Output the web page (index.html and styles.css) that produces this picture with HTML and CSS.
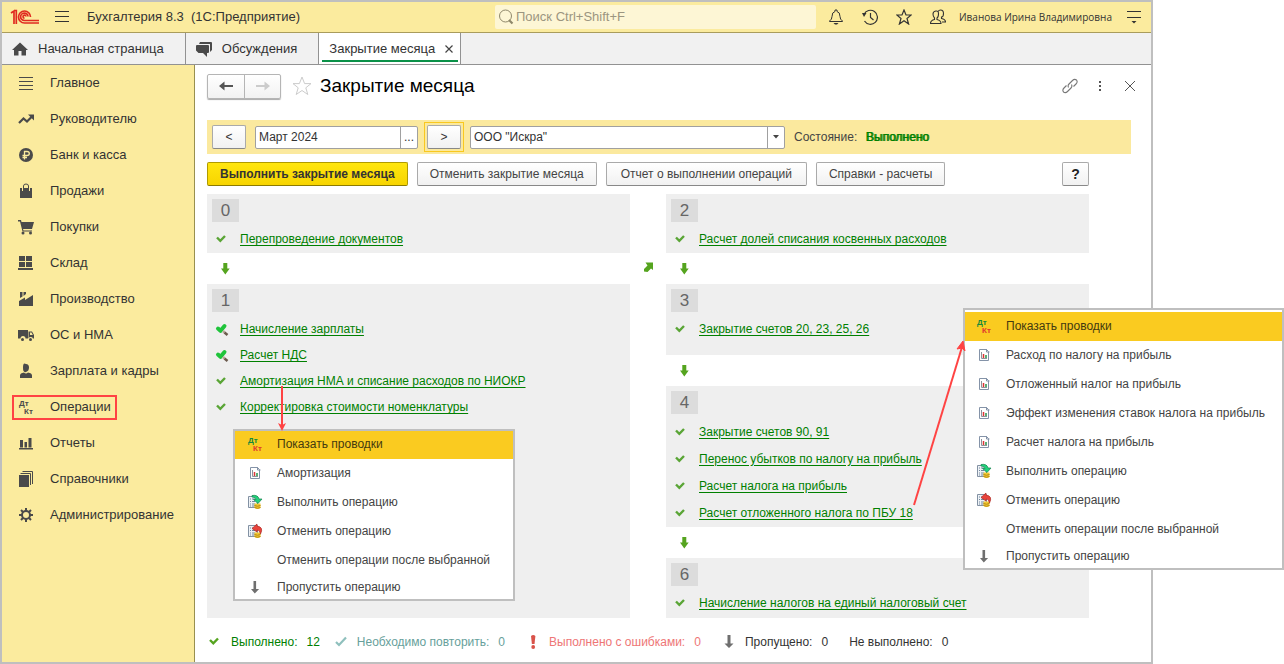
FILE: index.html
```html
<!DOCTYPE html>
<html lang="ru">
<head>
<meta charset="utf-8">
<title>Закрытие месяца</title>
<link rel="stylesheet" href="styles.css">
</head>
<body>
<svg class="defs" aria-hidden="true">
  <symbol id="check" viewBox="0 0 14 14"><path d="M2 5.500l3.300 3.300L10 4" fill="none" stroke="currentColor" stroke-width="2.400"/></symbol>
  <symbol id="check-hand" viewBox="0 0 14 14"><path d="M3 6.500l2.500 2.300L9.500 4" fill="none" stroke="#1fc43b" stroke-width="4" stroke-linecap="round" stroke-linejoin="round"/><path d="M8 9l1.500 1.500" stroke="#b9a797" stroke-width="2.500"/><path d="M9.500 10.500l3 2.500" stroke="#6b5a4d" stroke-width="2.500"/></symbol>
  <symbol id="down" viewBox="0 0 14 14"><path d="M5.300 1h4v5.500h2.400L7.300 12.500 3 6.500h2.300Z" fill="#55a41f"/></symbol>
  <symbol id="up-right" viewBox="0 0 14 14"><path d="M4.500 2.500H12V10l-2-1.500-3.500 3.500-3.500-.5V9l3.500-3.500Z" fill="#55a41f"/></symbol>
  <symbol id="skip" viewBox="0 0 16 16"><path d="M6.500 2h2.600v8h3L7.800 14.500 4 10h2.500Z" fill="#6f6f6f"/></symbol>
  <symbol id="report" viewBox="0 0 16 16"><path d="M3.500 2.500h7l2 2v9h-9Z" fill="#fff" stroke="#8493a8"/><path d="M10.500 2v3h3" fill="none" stroke="#8493a8"/><path d="M5.500 5v6.500H11" fill="none" stroke="#8d939b"/><path d="M7.500 7v4" stroke="#dc3636" stroke-width="1.500"/><path d="M10 8v3" stroke="#249448" stroke-width="1.500"/></symbol>
  <symbol id="sheet" viewBox="0 0 16 16"><path d="M1.500 2.500h9v11h-9Z" fill="#eef2f6" stroke="#8291a3"/><path d="M3 5h1m1 0h3M3 7.500h1m1 0h3M3 10h1m1 0h3M3 12h1m1 0h3" stroke="#71869d"/><path d="M7.500 9.500h6v4.500q-3 2-6 0Z" fill="#f2c832"/><path d="M7.500 11.500q3 1.500 6 0M7.500 13.500q3 1.500 6 0" fill="none" stroke="#b58813"/></symbol>
  <symbol id="run" viewBox="0 0 16 16"><use href="#sheet"/><path d="M5 1.500q6-1 7 3.500h3L11 9.500 6.500 5.500H9Q8.500 3 5 3Z" fill="#21d17a" stroke="#16834d" stroke-width=".7"/></symbol>
  <symbol id="undo" viewBox="0 0 16 16"><use href="#sheet"/><path d="M10 1l-5 4.500L10 9V7q3 0 3.500 4Q17 4 10 3Z" fill="#e8433c" stroke="#ae2823" stroke-width=".7"/></symbol>
</svg>

<div class="stage">
  <div class="window">
    <header class="topbar">
      <svg class="logo" viewBox="0 0 30 16" aria-label="1С"><g fill="none" stroke="#e02a20" stroke-width="1.700"><path d="M1 4l3-2v13M4 1.500h2.300V15"/><path d="M20.500 8a6 6 0 1 0-6 6H29"/><path d="M18 7.500a3.700 3.700 0 1 0-3.700 4H29"/><path d="M16 7.500a1.500 1.500 0 1 0-1.500 1.700"/></g></svg>
      <button class="icon-btn burger" aria-label="Меню"><svg viewBox="0 0 16 16"><path d="M1 2.500h14M1 7.500h14M1 12.500h14" stroke="#333"/></svg></button>
      <span class="app-name">Бухгалтерия 8.3&nbsp; (1С:Предприятие)</span>
      <label class="search"><svg viewBox="0 0 16 16"><circle cx="7.500" cy="7" r="6" fill="none" stroke="#8f886b"/><path d="M11 11l3.500 3.500" stroke="#8f886b" stroke-width="2.200"/></svg><input type="search" placeholder="Поиск Ctrl+Shift+F" aria-label="Поиск"></label>
      <div class="tools">
        <button class="icon-btn" aria-label="Уведомления"><svg viewBox="0 0 16 16"><path d="M1.500 12.500V12Q4 10.500 4 7.500 4 3 7 2.500V1h2v1.500q3 .5 3 5 0 3 2.500 4.500v.5Z" fill="none" stroke="#333"/><path d="M5.500 14h5l-1.500 1.500H7Z" fill="#333"/></svg></button>
        <button class="icon-btn" aria-label="История"><svg viewBox="0 0 16 16"><path d="M2 5.500A7 7 0 1 1 2.500 12" fill="none" stroke="#333" stroke-width="1.200"/><path d="M0 4h4.500L2 8Z" fill="#333"/><path d="M8.500 4v4.500l3 2.500" fill="none" stroke="#333" stroke-width="1.200"/></svg></button>
        <button class="icon-btn" aria-label="Избранное"><svg viewBox="0 0 16 16"><path d="M8 1l2 5h5.200l-4.200 3.500 1.600 5.500L8 11.800 3.400 15 5 9.500.8 6H6Z" fill="none" stroke="#333" stroke-width="1.200"/></svg></button>
        <button class="icon-btn" aria-label="Пользователи"><svg viewBox="0 0 16 16"><path d="M.5 14.500q0-3 4-4V9Q3 7.500 3 5t2.800-3T8.500 5 7 9v1.500q4 1 4 4Z" fill="none" stroke="#333" stroke-width="1.100"/><path d="M8 2.500q1-1.500 2.500-1.500Q13.500 1 13.500 4.500T11.500 8v1.500q4 .8 4 3.500H12" fill="none" stroke="#333" stroke-width="1.100"/></svg></button>
      </div>
      <span class="user">Иванова Ирина Владимировна</span>
      <button class="icon-btn" aria-label="Настройки"><svg viewBox="0 0 16 16"><path d="M1 2.500h14M1 8.500h14" stroke="#333"/><path d="M5.500 12h5L8 14.500Z" fill="#333"/></svg></button>
    </header>

    <nav class="tabs">
      <a class="tab tab-home" href="#"><svg viewBox="0 0 16 16"><path d="M8 1.500L16 9h-2v5.500H9.500V10h-3v4.500H2V9H0Z" fill="#4a4a4a"/></svg>Начальная страница</a>
      <a class="tab tab-talk" href="#"><svg viewBox="0 0 16 16"><path d="M4 1h11q1 0 1 1v7l-2 2V3H3Z" fill="#4a4a4a"/><path d="M1 4h11q1 0 1 1v6q0 1-1 1h-1v4l-4-4H2.500L0 9.500V5q0-1 1-1Z" fill="#4a4a4a"/></svg>Обсуждения</a>
      <div class="tab tab-active"><a href="#">Закрытие месяца</a><button class="tab-close" aria-label="Закрыть вкладку"><svg viewBox="0 0 8 8"><path d="M.5.5l7 7m0-7l-7 7" stroke="#444" stroke-width="1.200"/></svg></button></div>
    </nav>

    <div class="body">
      <nav class="sidebar">
        <div class="nav-row"><a href="#"><svg viewBox="0 0 16 16"><path d="M1 2.500h14M1 6.500h14M1 10.500h14M1 14.500h14" stroke="#4a4a4a"/></svg>Главное</a></div>
        <div class="nav-row"><a href="#"><svg viewBox="0 0 16 16"><path d="M1 12l4.500-4.500 3.500 3L14 5.500" fill="none" stroke="#4a4a4a" stroke-width="2.200"/><path d="M10 3.500h6v6Z" fill="#4a4a4a"/></svg>Руководителю</a></div>
        <div class="nav-row"><a href="#"><svg viewBox="0 0 16 16"><circle cx="8" cy="8" r="7" fill="#4a4a4a"/><path d="M6.500 12.500V4.500H9q2.300 0 2.300 2T9 8.500H4.500M4.500 10.500H9" fill="none" stroke="#fbeb9e" stroke-width="1.300"/></svg>Банк и касса</a></div>
        <div class="nav-row"><a href="#"><svg viewBox="0 0 16 16"><path d="M2 5h2v3h1V5h6v3h1V5h2v10H2Z" fill="#4a4a4a"/><path d="M5.500 7V3q0-2 2.500-2t2.500 2v4" fill="none" stroke="#4a4a4a"/></svg>Продажи</a></div>
        <div class="nav-row"><a href="#"><svg viewBox="0 0 16 16"><path d="M0 1h3l.5 2H16l-2 7H5l.5 1.500H14v1H4.500L2 2.500H0Z" fill="#4a4a4a"/><circle cx="5" cy="14" r="1.500" fill="#4a4a4a"/><circle cx="12.500" cy="14" r="1.500" fill="#4a4a4a"/></svg>Покупки</a></div>
        <div class="nav-row"><a href="#"><svg viewBox="0 0 16 16"><path d="M1 1h6v5H1ZM8 1h6v5H8ZM1 7h6v5H1ZM8 7h6v5H8ZM0 13h15v2H0Z" fill="#4a4a4a"/></svg>Склад</a></div>
        <div class="nav-row"><a href="#"><svg viewBox="0 0 16 16"><path d="M1 10l6-3.500V9l8-5v11H1ZM2 1h2.500v4.500L2 7ZM5.500 1H8v2L5.500 5Z" fill="#4a4a4a"/></svg>Производство</a></div>
        <div class="nav-row"><a href="#"><svg viewBox="0 0 16 16"><path d="M0 3h10v8.500H7.500a2.500 2.500 0 0 0-5 0H0ZM10.500 4.500H14L16 8v3.500h-1a2.500 2.500 0 0 0-4.500 0ZM12 5.500V8h2.800l-1.300-2.500Z" fill="#4a4a4a" fill-rule="evenodd"/><circle cx="4.500" cy="12.500" r="1.500" fill="#4a4a4a"/><circle cx="12.500" cy="12.500" r="1.500" fill="#4a4a4a"/></svg>ОС и НМА</a></div>
        <div class="nav-row"><a href="#"><svg viewBox="0 0 16 16"><path d="M8 1q3 0 3 3.500T8 9 5 4.500 8 1Z" fill="#4a4a4a"/><path d="M2 15v-2.500Q2 10 6 9.500q2 2 4 0 4 .5 4 3V15Z" fill="#4a4a4a"/></svg>Зарплата и кадры</a></div>
        <div class="nav-row"><a class="marked" href="#"><svg class="mono" viewBox="0 0 16 16"><text x="1" y="7" class="dt">Дт</text><text x="6" y="15" class="kt">Кт</text></svg>Операции</a></div>
        <div class="nav-row"><a href="#"><svg viewBox="0 0 16 16"><path d="M1 13h14v1.500H1ZM2 5h3v7.500H2ZM6.500 7H9v5.500H6.500ZM10.500 3h3v9.500h-3Z" fill="#4a4a4a"/></svg>Отчеты</a></div>
        <div class="nav-row"><a href="#"><svg viewBox="0 0 16 16"><path d="M1 4h10v12H1Z" fill="#4a4a4a"/><path d="M2.500 2.500h10V14M4.500.5h10V13" fill="none" stroke="#4a4a4a"/></svg>Справочники</a></div>
        <div class="nav-row"><a href="#"><svg viewBox="0 0 16 16"><g stroke="#4a4a4a" stroke-width="2"><path d="M8 1v3M8 12v3M1 8h3M12 8h3M3 3l2.200 2.200M10.800 10.800L13 13M13 3l-2.200 2.200M5.200 10.800L3 13"/><circle cx="8" cy="8" r="4" fill="none"/></g></svg>Администрирование</a></div>
      </nav>

      <main class="main">
        <div class="heading">
          <div class="history"><button aria-label="Назад"><svg viewBox="0 0 16 16"><path d="M1 8l5.500-4.500V7H15v2H6.500v3.500Z" fill="#555"/></svg></button><button aria-label="Вперед" disabled><svg viewBox="0 0 16 16"><path d="M15 8L9.500 3.500V7H1v2h8.500v3.500Z" fill="#ccc"/></svg></button></div>
          <button class="icon-btn fav" aria-label="В избранное"><svg viewBox="0 0 20 20"><path d="M10 1l2.600 6.600H19l-5.200 4.200 2 6.700L10 14.500l-5.800 4 2-6.700L1 7.600h6.400Z" fill="none" stroke="#ccc"/></svg></button>
          <h1>Закрытие месяца</h1>
          <div class="form-tools">
            <button class="icon-btn" aria-label="Ссылка"><svg viewBox="0 0 16 16"><g fill="none" stroke="#777" stroke-width="1.100"><path d="M6.500 9.500Q5.500 7.500 7 6l3.500-3.500q2-2 4-.5 1.500 2-.5 4L11.500 8.500"/><path d="M9.500 6.500q1 2-.5 3.500L5.500 13.500q-2 2-4 .5-1.500-2 .5-4L4.500 7.500"/></g></svg></button>
            <button class="icon-btn" aria-label="Еще"><svg viewBox="0 0 16 16"><path d="M7 3h2v2H7ZM7 7h2v2H7ZM7 11h2v2H7Z" fill="#555"/></svg></button>
            <button class="icon-btn" aria-label="Закрыть"><svg viewBox="0 0 16 16"><path d="M3 3l10 10M13 3L3 13" stroke="#555"/></svg></button>
          </div>
        </div>

        <div class="filter">
          <button class="btn step">&lt;</button>
          <span class="field month"><input type="text" value="Март 2024" aria-label="Месяц"><button aria-label="Выбрать месяц">...</button></span>
          <span class="focus"><button class="btn step">&gt;</button></span>
          <span class="field org"><select aria-label="Организация"><option>ООО "Искра"</option></select><span class="caret"><svg viewBox="0 0 6 4"><path d="M0 0h6L3 3.500Z" fill="#444"/></svg></span></span>
          <span class="state">Состояние: <b>Выполнено</b></span>
        </div>

        <div class="commands">
          <button class="btn primary">Выполнить закрытие месяца</button>
          <button class="btn">Отменить закрытие месяца</button>
          <button class="btn wide">Отчет о выполнении операций</button>
          <button class="btn">Справки - расчеты</button>
          <button class="btn help">?</button>
        </div>

        <div class="flow">
          <div class="column">
            <section class="block">
              <div class="num">0</div>
              <div class="op"><svg><use href="#check"/></svg><a href="#">Перепроведение документов</a></div>
            </section>
            <div class="link-down"><svg><use href="#down"/></svg></div>
            <section class="block last">
              <div class="num">1</div>
              <div class="op"><svg><use href="#check-hand"/></svg><a href="#">Начисление зарплаты</a></div>
              <div class="op"><svg><use href="#check-hand"/></svg><a href="#">Расчет НДС</a></div>
              <div class="op"><svg><use href="#check"/></svg><a href="#">Амортизация НМА и списание расходов по НИОКР</a></div>
              <div class="op"><svg><use href="#check"/></svg><a href="#">Корректировка стоимости номенклатуры</a></div>
            </section>
          </div>
          <div class="between"><svg><use href="#up-right"/></svg></div>
          <div class="column">
            <section class="block">
              <div class="num">2</div>
              <div class="op"><svg><use href="#check"/></svg><a href="#">Расчет долей списания косвенных расходов</a></div>
            </section>
            <div class="link-down"><svg><use href="#down"/></svg></div>
            <section class="block roomy">
              <div class="num">3</div>
              <div class="op"><svg><use href="#check"/></svg><a href="#">Закрытие счетов 20, 23, 25, 26</a></div>
            </section>
            <div class="link-down"><svg><use href="#down"/></svg></div>
            <section class="block loose">
              <div class="num">4</div>
              <div class="op"><svg><use href="#check"/></svg><a href="#">Закрытие счетов 90, 91</a></div>
              <div class="op"><svg><use href="#check"/></svg><a href="#">Перенос убытков по налогу на прибыль</a></div>
              <div class="op"><svg><use href="#check"/></svg><a href="#">Расчет налога на прибыль</a></div>
              <div class="op"><svg><use href="#check"/></svg><a href="#">Расчет отложенного налога по ПБУ 18</a></div>
            </section>
            <div class="link-down"><svg><use href="#down"/></svg></div>
            <section class="block last">
              <div class="num">6</div>
              <div class="op"><svg><use href="#check"/></svg><a href="#">Начисление налогов на единый налоговый счет</a></div>
            </section>
          </div>
        </div>

        <footer class="legend">
          <div class="legend-item done"><svg viewBox="0 0 14 14"><path d="M2 5l3.300 3.300L10 3.500" fill="none" stroke="#55a41f" stroke-width="2.400"/></svg><span>Выполнено:</span><span>12</span></div>
          <div class="legend-item repeat"><svg viewBox="0 0 14 14"><path d="M2 7l3 3 7-7.500" fill="none" stroke="#8fc0bd" stroke-width="2.200"/></svg><span>Необходимо повторить:</span><span>0</span></div>
          <div class="legend-item failed"><svg viewBox="0 0 14 14"><path d="M5 1q2.200-2 4.400 0L8.500 9h-2.600Z" fill="#d9534a"/><circle cx="7.200" cy="12" r="1.900" fill="#d9534a"/></svg><span>Выполнено с ошибками:</span><span>0</span></div>
          <div class="legend-item skipped"><svg viewBox="0 0 14 14"><path d="M5.500 0h3v8.500h3L7 13 2.500 8.500h3Z" fill="#6f6f6f"/></svg><span>Пропущено:</span><span>0</span></div>
          <div class="legend-item"><span>Не выполнено:</span><span>0</span></div>
        </footer>
      </main>
    </div>
  </div>

  <ul class="menu menu-left">
    <li><button class="active"><svg viewBox="0 0 16 16"><text x="1" y="7" class="dt">Дт</text><text x="6" y="15" class="kt">Кт</text></svg>Показать проводки</button></li>
    <li><button><svg><use href="#report"/></svg>Амортизация</button></li>
    <li><button><svg><use href="#run"/></svg>Выполнить операцию</button></li>
    <li><button><svg><use href="#undo"/></svg>Отменить операцию</button></li>
    <li><button><svg></svg>Отменить операции после выбранной</button></li>
    <li><button><svg><use href="#skip"/></svg>Пропустить операцию</button></li>
  </ul>

  <ul class="menu menu-right">
    <li><button class="active"><svg viewBox="0 0 16 16"><text x="1" y="7" class="dt">Дт</text><text x="6" y="15" class="kt">Кт</text></svg>Показать проводки</button></li>
    <li><button><svg><use href="#report"/></svg>Расход по налогу на прибыль</button></li>
    <li><button><svg><use href="#report"/></svg>Отложенный налог на прибыль</button></li>
    <li><button><svg><use href="#report"/></svg>Эффект изменения ставок налога на прибыль</button></li>
    <li><button><svg><use href="#report"/></svg>Расчет налога на прибыль</button></li>
    <li><button><svg><use href="#run"/></svg>Выполнить операцию</button></li>
    <li><button><svg><use href="#undo"/></svg>Отменить операцию</button></li>
    <li><button><svg></svg>Отменить операции после выбранной</button></li>
    <li><button><svg><use href="#skip"/></svg>Пропустить операцию</button></li>
  </ul>

  <svg class="arrow arrow-left" viewBox="0 0 10 46"><path d="M5 0v42" stroke="#ff4343" stroke-width="2"/><path d="M1 37l4 2 4-2-4 8Z" fill="#ff4343"/></svg>
  <svg class="arrow arrow-right" viewBox="0 0 54 166"><path d="M2 164L50 6" stroke="#ff4343" stroke-width="2"/><path d="M51 0l-6 8 5-1 3 3Z" fill="#ff4343" stroke="#ff4343"/></svg>
</div>
</body>
</html>
```
FILE: styles.css
```css
* { box-sizing: border-box; }

body {
  margin: 0;
  background: #fff;
  color: #333;
  font: 12px/16px "Liberation Sans", Arial, sans-serif;
}

button, input, select {
  font: inherit;
  color: inherit;
  margin: 0;
  padding: 0;
  border: 0;
  background: none;
}

a { color: inherit; text-decoration: none; }
svg { display: block; flex: none; width: 16px; height: 16px; }
.defs { position: absolute; width: 0; height: 0; }

.dt, .kt { font: bold 8px "Liberation Sans", Arial, sans-serif; }
.dt { fill: #168a3c; }
.kt { fill: #e03a2e; }
.mono .dt, .mono .kt { fill: #4a4a4a; }

.stage { position: relative; display: flex; min-height: 100vh; padding-right: 131px; }
.window { flex: 1; display: flex; flex-direction: column; border: 2px solid #bfbfbf; }

/* Top bar */
.topbar {
  display: flex;
  align-items: center;
  height: 31px;
  padding: 0 9px 0 8px;
  background: #fbeb9e;
  border-bottom: 1px solid #a99c5c;
}
.logo { width: 30px; }
.burger { margin-left: 14px; }
.app-name { margin-left: 17px; font-size: 13px; }
.icon-btn { display: flex; }
.search {
  display: flex;
  align-items: center;
  gap: 2px;
  width: 321px;
  height: 24px;
  margin-left: auto;
  padding: 0 3px;
  border-radius: 2px;
  background: #fdf6d5;
  color: #8f886b;
  font-size: 13px;
}
.search input { flex: 1; min-width: 0; outline: none; }
.search input::placeholder { color: #9b9580; opacity: 1; }
.tools { display: flex; gap: 18px; margin-left: 12px; }
.user { min-width: 154px; margin: 0 13px; font: 10px/16px "Open Sans", sans-serif; white-space: nowrap; }

/* Tabs */
.tabs { display: flex; height: 32px; background: #f1f1f1; border-bottom: 1px solid #929292; font-size: 13px; }
.tab { display: flex; align-items: center; gap: 10px; padding: 0 21px 0 10px; border-right: 1px solid #929292; }
.tab-active { position: relative; gap: 10px; padding: 0 7px 0 10px; background: #fff; }
.tab-active::after { content: ""; position: absolute; left: 3px; right: 2px; bottom: 2px; height: 2px; background: #0a9148; }
.tab-close svg { width: 8px; height: 8px; }

/* Sidebar */
.body { flex: 1; display: flex; }
.sidebar { flex: none; width: 193px; background: #fbeb9e; border-right: 1px solid #99904f; font-size: 13px; }
.nav-row { display: flex; align-items: center; height: 36px; padding-left: 10px; }
.nav-row a { display: flex; align-items: center; gap: 16px; height: 25px; padding: 0 4px; border: 2px solid transparent; }
.nav-row .marked { border-color: #ff4343; }

/* Form */
.main { flex: 1; display: flex; flex-direction: column; padding: 0 20px 0 12px; }
.heading { display: flex; align-items: center; height: 55px; padding: 0 0 13px; }
.history { display: flex; border: 1px solid #b5b5b5; border-radius: 2px; background: linear-gradient(#fff, #f2f2f2); box-shadow: 0 1px 1px #aaa; }
.history button { display: flex; align-items: center; justify-content: center; width: 36px; height: 23px; }
.history button + button { border-left: 1px solid #b5b5b5; }
.fav { margin: 0 8px 0 11px; }
.fav svg { width: 20px; height: 20px; }
h1 { margin: 0; color: #000; font-size: 19px; font-weight: normal; line-height: 24px; }
.form-tools { display: flex; gap: 14px; margin-left: auto; margin-right: -7px; }

.filter { display: flex; align-items: center; height: 34px; padding: 0 5px; background: #fbe99e; }
.btn {
  height: 24px;
  padding: 0 12px;
  border: 1px solid #aaa;
  border-bottom-color: #888;
  border-radius: 2px;
  background: linear-gradient(#fff, #f1f1f1);
  color: #444;
  font-size: 12px;
  white-space: nowrap;
}
.step { width: 34px; padding: 0; color: #333; }
.wide { padding: 0 14px; }
.focus { display: flex; margin: 0 6px 0 6px; padding: 2px; border: 1px solid #f9c81f; }
.field { display: flex; height: 23px; border: 1px solid #a0a0a0; border-radius: 2px; background: #fff; }
.month { width: 163px; margin-left: 9px; }
.month input { flex: 1; min-width: 0; padding-left: 3px; }
.month button { width: 17px; border-left: 1px solid #a0a0a0; }
.org { position: relative; width: 315px; }
.org select { appearance: none; flex: 1; padding-left: 3px; }
.caret { position: absolute; top: 0; right: 0; bottom: 0; display: flex; align-items: center; padding: 0 5px; border-left: 1px solid #a0a0a0; pointer-events: none; }
.caret svg { width: 6px; height: 4px; }
.state { margin-left: 9px; color: #444; }
.state b { margin-left: 5px; color: #008000; font-weight: normal; text-shadow: 1px 0 #008000; }

.commands { display: flex; gap: 9px; padding: 8px 42px 8px 0; }
.primary { border-color: #b09b00; border-bottom-color: #8c7b00; background: linear-gradient(#ffe60f, #f7d400); color: #333; font-weight: bold; }
.help { width: 27px; margin-left: auto; padding: 0; color: #222; font-size: 14px; font-weight: bold; }

/* Operation flow */
.flow { flex: 1; display: grid; grid-template-columns: 1fr 36px 1fr; padding-right: 42px; }
.column { display: flex; flex-direction: column; }
.block { padding: 5px 5px 1px; background: #efefef; }
.roomy { padding-bottom: 13px; }
.last { flex: 1; }
.num { width: 27px; height: 23px; margin-bottom: 4px; background: #dcdcdc; color: #666; font-size: 17px; line-height: 23px; text-align: center; }
.op { display: flex; align-items: center; gap: 11px; height: 26px; padding-left: 3px; }
.loose .op { height: 27px; }
.op svg, .link-down svg, .between svg { width: 14px; height: 14px; color: #5aa536; }
.op a { color: #008000; text-decoration: underline; text-underline-offset: 2px; }
.link-down { display: flex; align-items: center; height: 31px; padding-left: 11px; }
.between { padding: 66px 0 0 11px; }

/* Status legend */
.legend { display: flex; align-items: center; height: 44px; padding: 4px 0 0 1px; }
.legend-item { display: flex; align-items: center; gap: 9px; margin-right: 14px; }
.legend-item svg { width: 14px; height: 14px; }
.done { color: #008000; }
.repeat, .failed, .skipped { margin-right: 21px; }
.repeat { color: #679f9b; }
.failed { color: #ee7676; }

/* Context menus */
.menu { position: absolute; margin: 0; padding: 0; list-style: none; border: 2px solid #bfbfbf; background: #fff; }
.menu button { display: flex; align-items: center; gap: 14px; width: 100%; height: 29px; padding: 0 0 2px 12px; color: #444; text-align: left; }
.menu li:last-child button { height: 24px; padding-bottom: 0; }
.menu .active { background: #facb20; color: #443a10; }
.menu-left { left: 233px; top: 429px; width: 282px; }
.menu-left .active { height: 28px; }
.menu-right { left: 963px; top: 308px; width: 321px; padding-top: 2px; }
.menu-right button { padding-left: 11px; }

.arrow { position: absolute; pointer-events: none; }
.arrow-left { left: 277px; top: 386px; width: 10px; height: 46px; }
.arrow-right { left: 912px; top: 341px; width: 54px; height: 166px; }
```
